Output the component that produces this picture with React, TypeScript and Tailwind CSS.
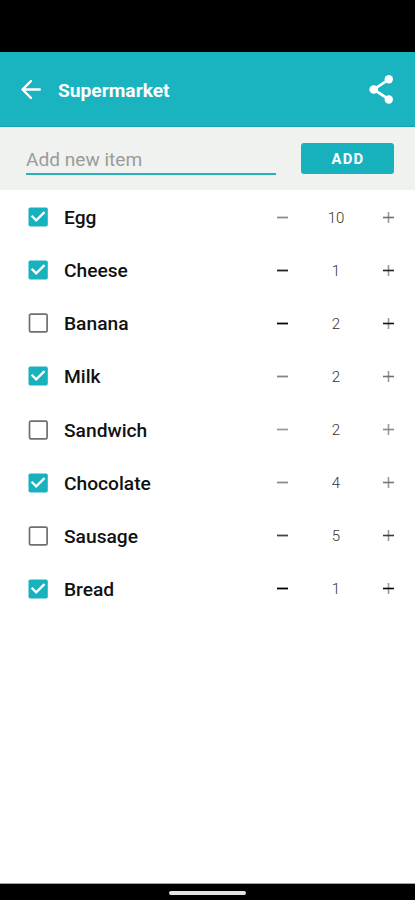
import { useState } from "react"

const initialItems = [
  { name: "Egg", amount: 10, checked: true, minus: "#8c8c8c", plus: "#707070" },
  { name: "Cheese", amount: 1, checked: true, minus: "#222222", plus: "#222222" },
  { name: "Banana", amount: 2, checked: false, minus: "#080808", plus: "#111111" },
  { name: "Milk", amount: 2, checked: true, minus: "#858585", plus: "#707070" },
  { name: "Sandwich", amount: 2, checked: false, minus: "#9b9b9b", plus: "#888888" },
  { name: "Chocolate", amount: 4, checked: true, minus: "#8c8c8c", plus: "#777777" },
  { name: "Sausage", amount: 5, checked: false, minus: "#444444", plus: "#3c3c3c" },
  { name: "Bread", amount: 1, checked: true, minus: "#000000", plus: "#000000" },
]

function BackIcon() {
  return (
    <svg width="24" height="24" viewBox="0 0 24 24" fill="none" stroke="white" strokeWidth="2.4" strokeLinecap="round" strokeLinejoin="round">
      <path d="M20.8 12.5H3.8M12 4L3.5 12.5l8.5 8.5" />
    </svg>
  )
}

function ShareIcon() {
  return (
    <svg width="26" height="32" viewBox="0 0 26 32" fill="white">
      <path d="M20 6.3L4.7 16.5 20 26.5" fill="none" stroke="white" strokeWidth="2.7" />
      <circle cx="19.8" cy="6.3" r="4.2" />
      <circle cx="4.7" cy="16.5" r="4.3" />
      <circle cx="19.8" cy="26.5" r="4.2" />
    </svg>
  )
}

function CheckBox({ checked }: { checked: boolean }) {
  return (
    <svg width="20" height="20" viewBox="0 0 20 20" fill="none">
      {checked ? (
        <>
          <rect x="0.5" y="0.4" width="19.3" height="19.2" rx="1.8" fill="#18b2be" />
          <path d="M3.6 8.8l4.6 4.6 8.3-8.3" stroke="white" strokeWidth="2.3" />
        </>
      ) : (
        <rect x="1.5" y="1.2" width="17.6" height="17.6" rx="1.4" stroke="#6f6f6f" strokeWidth="1.7" />
      )}
    </svg>
  )
}

export default function App() {
  const [items, setItems] = useState(initialItems)

  const toggle = (index: number) => {
    setItems(items.map((item, i) => (i === index ? { ...item, checked: !item.checked } : item)))
  }

  const changeAmount = (index: number, by: number) => {
    setItems(items.map((item, i) => (i === index ? { ...item, amount: Math.max(1, item.amount + by) } : item)))
  }

  return (
    <div className="flex h-[900px] w-[415px] flex-col overflow-hidden bg-white font-[Roboto,sans-serif]">
      <div className="h-[52px] shrink-0 bg-black" />
      <header className="flex h-[75px] shrink-0 items-center border-b border-[#12a3af] bg-[#1ab3c0] pr-[20px] pl-[19px]">
        <button>
          <BackIcon />
        </button>
        <h1 className="ml-[15px] flex-1 pt-[4px] text-[19.2px] leading-6 font-bold text-white">Supermarket</h1>
        <button>
          <ShareIcon />
        </button>
      </header>
      <div className="flex h-[63px] shrink-0 items-start justify-between bg-[#f0f2ef] pr-[21px] pl-[26px]">
        <input
          className="mt-[16px] h-[32px] w-[250px] border-b-2 border-[#2bb0b9] pt-[2px] text-[19.1px] outline-none placeholder:text-[#9a9c9a]"
          placeholder="Add new item"
        />
        <button className="mt-[16px] h-[31px] w-[93px] rounded-[3px] bg-[#18b2be] pt-px pl-px text-[14.8px] leading-none font-bold tracking-[1.2px] text-white">
          ADD
        </button>
      </div>
      <ul className="flex-1 pt-[0.6px]">
        {items.map((item, i) => (
          <li key={item.name} className="flex h-[53.1px] items-center pr-[20px] pl-[28px]">
            <button onClick={() => toggle(i)}>
              <CheckBox checked={item.checked} />
            </button>
            <span className="ml-[16px] flex-1 pt-[2px] text-[19.2px] leading-6 font-medium text-[#111111]">{item.name}</span>
            <button onClick={() => changeAmount(i, -1)}>
              <svg width="13" height="13" viewBox="0 0 13 13">
                <path d="M1 6.5h11" stroke={item.minus} strokeWidth="1.8" />
              </svg>
            </button>
            <span className="w-[93px] pt-px pl-px text-center text-[15px] leading-5 font-light text-[#333333]">{item.amount}</span>
            <button onClick={() => changeAmount(i, 1)}>
              <svg width="13" height="13" viewBox="0 0 13 13">
                <path d="M6.5 1v11" stroke="#999999" strokeWidth="1.6" />
                <path d="M1 6.5h11" stroke={item.plus} strokeWidth="1.6" />
              </svg>
            </button>
          </li>
        ))}
      </ul>
      <footer className="flex h-[17px] shrink-0 justify-center border-t border-[#a5a5a5] bg-black pt-[7px]">
        <div className="h-[4px] w-[77px] rounded-full bg-[#e4e4e4]" />
      </footer>
    </div>
  )
}
